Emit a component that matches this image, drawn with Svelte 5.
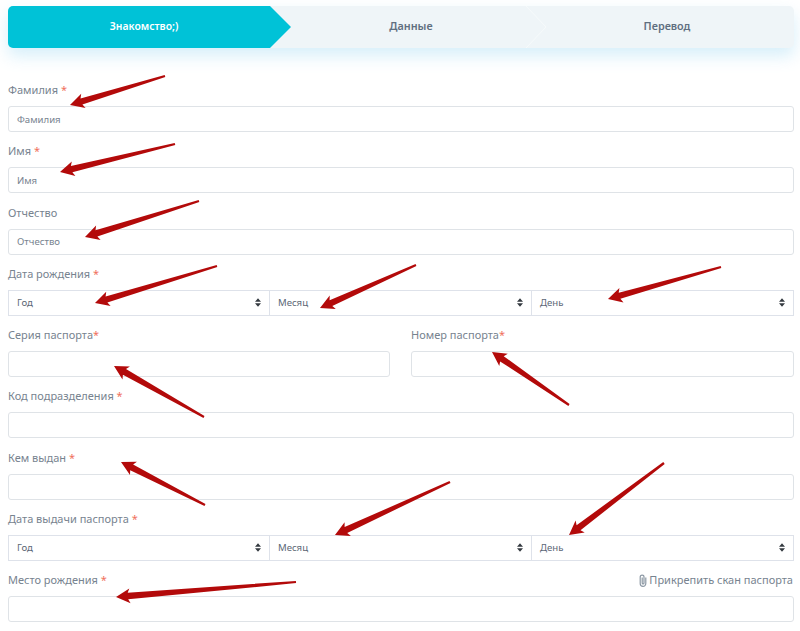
<script>
  const arrows = [
    [165, 76, 70, 105], [175, 144, 60, 172], [199, 201, 85, 237],
    [217, 266, 95, 303], [416, 265, 320, 308], [721, 267, 608, 299],
    [204, 417, 114, 366], [569, 405, 492, 352], [205, 505, 121, 462],
    [450, 482, 335, 535], [664, 463, 569, 535], [296, 582, 116, 597]
  ];

  function arrowPoints([x1, y1, x2, y2]) {
    const len = Math.hypot(x2 - x1, y2 - y1);
    const ux = (x2 - x1) / len, uy = (y2 - y1) / len;
    const nx = -uy, ny = ux;
    const p = (along, side) =>
      `${(x2 - ux * along + nx * side).toFixed(1)},${(y2 - uy * along + ny * side).toFixed(1)}`;
    return [
      p(len, 1.1), p(12, 3.2), p(14, 7.5), `${x2},${y2}`, p(14, -7.5), p(12, -3.2), p(len, -1.1)
    ].join(' ');
  }

  const selects = ['Год', 'Месяц', 'День'];
</script>

<div class="page">
  <div class="steps">
    <div class="step active">Знакомство;)</div>
    <div class="step second">Данные</div>
    <div class="step third">Перевод</div>
    <svg class="divider" width="24" height="42" viewBox="0 0 24 42">
      <path d="M1 0 L21 21 L1 42" fill="none" stroke="#f6fafb" stroke-width="1" />
    </svg>
  </div>

  <form class="form">
    <div class="group">
      <span class="label">Фамилия <i>*</i></span>
      <div class="input ph">Фамилия</div>
    </div>
    <div class="group">
      <span class="label">Имя <i>*</i></span>
      <div class="input ph">Имя</div>
    </div>
    <div class="group">
      <span class="label">Отчество</span>
      <div class="input ph">Отчество</div>
    </div>
    <div class="group">
      <span class="label">Дата рождения <i>*</i></span>
      <div class="selects">
        {#each selects as s, i}
          <div class="select" class:first={i === 0}>
            {s}
            <svg width="6" height="9" viewBox="0 0 7 10"><path d="M3.5 0 L7 4 H0 Z M3.5 10 L0 6 H7 Z" fill="#343a40" /></svg>
          </div>
        {/each}
      </div>
    </div>
    <div class="group two">
      <div>
        <span class="label">Серия паспорта<i>*</i></span>
        <div class="input"></div>
      </div>
      <div>
        <span class="label">Номер паспорта<i>*</i></span>
        <div class="input"></div>
      </div>
    </div>
    <div class="group">
      <span class="label">Код подразделения <i>*</i></span>
      <div class="input"></div>
    </div>
    <div class="group">
      <span class="label">Кем выдан <i>*</i></span>
      <div class="input"></div>
    </div>
    <div class="group">
      <span class="label">Дата выдачи паспорта <i>*</i></span>
      <div class="selects">
        {#each selects as s, i}
          <div class="select" class:first={i === 0}>
            {s}
            <svg width="6" height="9" viewBox="0 0 7 10"><path d="M3.5 0 L7 4 H0 Z M3.5 10 L0 6 H7 Z" fill="#343a40" /></svg>
          </div>
        {/each}
      </div>
    </div>
    <div class="group">
      <div class="label-row">
        <span class="label">Место рождения <i>*</i></span>
        <span class="attach">
          <svg width="8" height="13" viewBox="0 0 8 13">
            <path d="M6.8 3.5 V9.6 A2.8 2.8 0 0 1 1.2 9.6 V3 A1.9 1.9 0 0 1 5 3 V9 A0.9 0.9 0 0 1 3.2 9 V3.6" fill="none" stroke="#8c98a4" stroke-width="1.2" />
          </svg>
          Прикрепить скан паспорта
        </span>
      </div>
      <div class="input"></div>
    </div>
  </form>

  <svg class="arrows" width="800" height="631" viewBox="0 0 800 631">
    {#each arrows as a}
      <polygon points={arrowPoints(a)} fill="#b30a0a" />
    {/each}
  </svg>
</div>

<style>
:global(body) {
  margin: 0;
  background: #fff;
}

.page {
  position: relative;
  width: 800px;
  height: 631px;
  overflow: hidden;
  padding: 6px 6px 0 8px;
  box-sizing: border-box;
  font-family: "Noto Sans", sans-serif;
  color: #6c7a8c;
}

.steps {
  position: relative;
  display: grid;
  grid-template-columns: 262px 262px 1fr;
  height: 42px;
  background: #eff5f8;
  border-radius: 5px;
  box-shadow: 0 8px 16px rgba(130, 205, 240, 0.32);
}

.step {
  display: flex;
  align-items: center;
  justify-content: center;
  padding-bottom: 3px;
  box-sizing: border-box;
  font-size: 10.8px;
  font-weight: 600;
  color: #5f6f80;
}

.step.active {
  position: relative;
  padding-left: 10px;
  background: #00c2d7;
  color: #fff;
  border-radius: 5px 0 0 5px;
  font-size: 10.4px;
  font-weight: 600;
  z-index: 1;
}

.second {
  padding-left: 20px;
}

.third {
  padding-left: 8px;
}

.step.active::after {
  content: "";
  position: absolute;
  left: 100%;
  top: 0;
  border-left: 21px solid #00c2d7;
  border-top: 21px solid transparent;
  border-bottom: 21px solid transparent;
}

.divider {
  position: absolute;
  left: 517px;
  top: 0;
}

.form {
  margin-top: 34px;
  display: flex;
  flex-direction: column;
}

.group {
  height: 61.28px;
  flex: none;
}

.two {
  display: grid;
  grid-template-columns: 382px 383px;
  gap: 21px;
}

.label {
  display: block;
  height: 24px;
  line-height: 16px;
  font-size: 11px;
  color: #77838f;
}

.label i {
  font-style: normal;
  color: #f0705c;
}

.label-row {
  display: flex;
  justify-content: space-between;
}

.attach {
  font-size: 11px;
  line-height: 16px;
  color: #77838f;
  display: flex;
  align-items: center;
  gap: 2px;
  height: 16px;
  margin-right: 1px;
}

.input {
  height: 26px;
  box-sizing: border-box;
  border: 1px solid #dfe3e7;
  border-radius: 3px;
  background: #fff;
  padding: 0 8px;
  display: flex;
  align-items: center;
  font-size: 9.6px;
}

.ph {
  color: #78838f;
}

.selects {
  display: grid;
  grid-template-columns: 260px 262px 1fr;
  height: 26px;
  border: 1px solid #dee2ea;
  box-sizing: border-box;
}

.select {
  display: flex;
  align-items: center;
  justify-content: space-between;
  padding: 0 8px 0 8px;
  font-size: 9.6px;
  color: #5c6876;
  border-left: 1px solid #dee2ea;
}

.select.first {
  border-left: none;
}

.arrows {
  position: absolute;
  left: 0;
  top: 0;
  pointer-events: none;
}
</style>
